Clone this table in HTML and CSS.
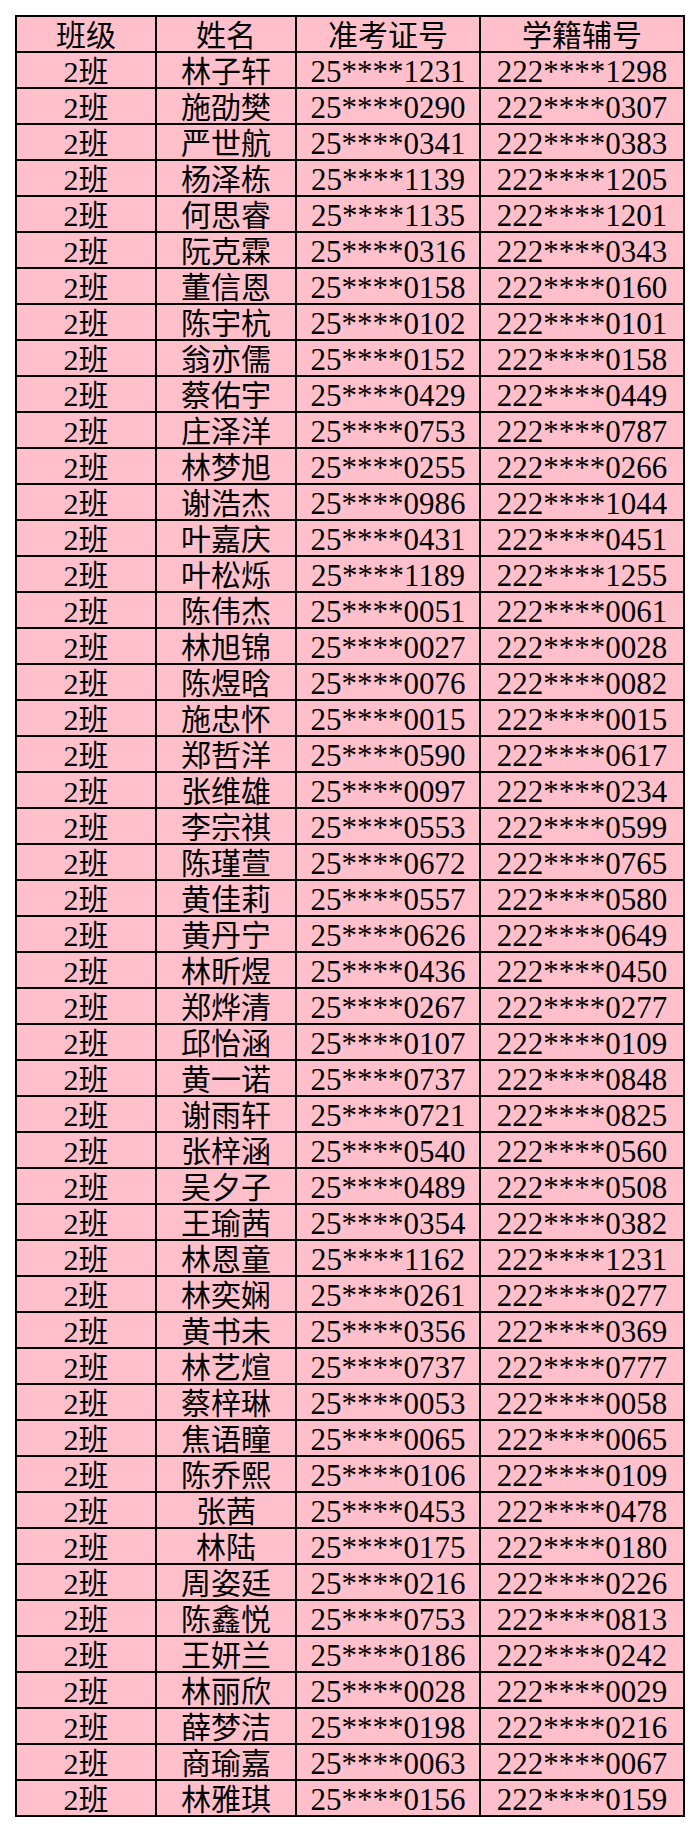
FILE: index.html
```html
<!DOCTYPE html>
<html lang="zh-CN">
<head>
<meta charset="utf-8">
<title>2班名单</title>
<link rel="stylesheet" href="styles.css">
</head>
<body>
<table class="sheet">
<thead>
<tr><th class="c1">班级</th><th class="c2">姓名</th><th class="c3">准考证号</th><th class="c4">学籍辅号</th></tr>
</thead>
<tbody>
<tr><td>2班</td><td>林子轩</td><td class="num">25****1231</td><td class="num">222****1298</td></tr>
<tr><td>2班</td><td>施劭樊</td><td class="num">25****0290</td><td class="num">222****0307</td></tr>
<tr><td>2班</td><td>严世航</td><td class="num">25****0341</td><td class="num">222****0383</td></tr>
<tr><td>2班</td><td>杨泽栋</td><td class="num">25****1139</td><td class="num">222****1205</td></tr>
<tr><td>2班</td><td>何思睿</td><td class="num">25****1135</td><td class="num">222****1201</td></tr>
<tr><td>2班</td><td>阮克霖</td><td class="num">25****0316</td><td class="num">222****0343</td></tr>
<tr><td>2班</td><td>董信恩</td><td class="num">25****0158</td><td class="num">222****0160</td></tr>
<tr><td>2班</td><td>陈宇杭</td><td class="num">25****0102</td><td class="num">222****0101</td></tr>
<tr><td>2班</td><td>翁亦儒</td><td class="num">25****0152</td><td class="num">222****0158</td></tr>
<tr><td>2班</td><td>蔡佑宇</td><td class="num">25****0429</td><td class="num">222****0449</td></tr>
<tr><td>2班</td><td>庄泽洋</td><td class="num">25****0753</td><td class="num">222****0787</td></tr>
<tr><td>2班</td><td>林梦旭</td><td class="num">25****0255</td><td class="num">222****0266</td></tr>
<tr><td>2班</td><td>谢浩杰</td><td class="num">25****0986</td><td class="num">222****1044</td></tr>
<tr><td>2班</td><td>叶嘉庆</td><td class="num">25****0431</td><td class="num">222****0451</td></tr>
<tr><td>2班</td><td>叶松烁</td><td class="num">25****1189</td><td class="num">222****1255</td></tr>
<tr><td>2班</td><td>陈伟杰</td><td class="num">25****0051</td><td class="num">222****0061</td></tr>
<tr><td>2班</td><td>林旭锦</td><td class="num">25****0027</td><td class="num">222****0028</td></tr>
<tr><td>2班</td><td>陈煜晗</td><td class="num">25****0076</td><td class="num">222****0082</td></tr>
<tr><td>2班</td><td>施忠怀</td><td class="num">25****0015</td><td class="num">222****0015</td></tr>
<tr><td>2班</td><td>郑哲洋</td><td class="num">25****0590</td><td class="num">222****0617</td></tr>
<tr><td>2班</td><td>张维雄</td><td class="num">25****0097</td><td class="num">222****0234</td></tr>
<tr><td>2班</td><td>李宗祺</td><td class="num">25****0553</td><td class="num">222****0599</td></tr>
<tr><td>2班</td><td>陈瑾萱</td><td class="num">25****0672</td><td class="num">222****0765</td></tr>
<tr><td>2班</td><td>黄佳莉</td><td class="num">25****0557</td><td class="num">222****0580</td></tr>
<tr><td>2班</td><td>黄丹宁</td><td class="num">25****0626</td><td class="num">222****0649</td></tr>
<tr><td>2班</td><td>林昕煜</td><td class="num">25****0436</td><td class="num">222****0450</td></tr>
<tr><td>2班</td><td>郑烨清</td><td class="num">25****0267</td><td class="num">222****0277</td></tr>
<tr><td>2班</td><td>邱怡涵</td><td class="num">25****0107</td><td class="num">222****0109</td></tr>
<tr><td>2班</td><td>黄一诺</td><td class="num">25****0737</td><td class="num">222****0848</td></tr>
<tr><td>2班</td><td>谢雨轩</td><td class="num">25****0721</td><td class="num">222****0825</td></tr>
<tr><td>2班</td><td>张梓涵</td><td class="num">25****0540</td><td class="num">222****0560</td></tr>
<tr><td>2班</td><td>吴夕子</td><td class="num">25****0489</td><td class="num">222****0508</td></tr>
<tr><td>2班</td><td>王瑜茜</td><td class="num">25****0354</td><td class="num">222****0382</td></tr>
<tr><td>2班</td><td>林恩童</td><td class="num">25****1162</td><td class="num">222****1231</td></tr>
<tr><td>2班</td><td>林奕娴</td><td class="num">25****0261</td><td class="num">222****0277</td></tr>
<tr><td>2班</td><td>黄书未</td><td class="num">25****0356</td><td class="num">222****0369</td></tr>
<tr><td>2班</td><td>林艺煊</td><td class="num">25****0737</td><td class="num">222****0777</td></tr>
<tr><td>2班</td><td>蔡梓琳</td><td class="num">25****0053</td><td class="num">222****0058</td></tr>
<tr><td>2班</td><td>焦语瞳</td><td class="num">25****0065</td><td class="num">222****0065</td></tr>
<tr><td>2班</td><td>陈乔熙</td><td class="num">25****0106</td><td class="num">222****0109</td></tr>
<tr><td>2班</td><td>张茜</td><td class="num">25****0453</td><td class="num">222****0478</td></tr>
<tr><td>2班</td><td>林陆</td><td class="num">25****0175</td><td class="num">222****0180</td></tr>
<tr><td>2班</td><td>周姿廷</td><td class="num">25****0216</td><td class="num">222****0226</td></tr>
<tr><td>2班</td><td>陈鑫悦</td><td class="num">25****0753</td><td class="num">222****0813</td></tr>
<tr><td>2班</td><td>王妍兰</td><td class="num">25****0186</td><td class="num">222****0242</td></tr>
<tr><td>2班</td><td>林丽欣</td><td class="num">25****0028</td><td class="num">222****0029</td></tr>
<tr><td>2班</td><td>薛梦洁</td><td class="num">25****0198</td><td class="num">222****0216</td></tr>
<tr><td>2班</td><td>商瑜嘉</td><td class="num">25****0063</td><td class="num">222****0067</td></tr>
<tr><td>2班</td><td>林雅琪</td><td class="num">25****0156</td><td class="num">222****0159</td></tr>
</tbody>
</table>
</body>
</html>
```
FILE: styles.css
```css
html, body {
  margin: 0;
  padding: 0;
  background: #ffffff;
}

.sheet {
  margin: 15px 0 0 15px;
  border-spacing: 2px;
  background: #000000;
  table-layout: fixed;
  width: 670px;
}

.sheet th,
.sheet td {
  background: #ffc0cb;
  color: #000000;
  padding: 4px 0 0 0;
  line-height: 30px;
  height: 30px;
  text-align: center;
  white-space: nowrap;
  font-family: "Liberation Serif", "Noto Sans CJK SC", serif;
  font-size: 30px;
  font-weight: normal;
  box-sizing: content-box;
}

.sheet .num {
  font-size: 31px;
}

.c1 { width: 138px; }
.c2 { width: 138px; }
.c3 { width: 182px; }
.c4 { width: 202px; }
```
